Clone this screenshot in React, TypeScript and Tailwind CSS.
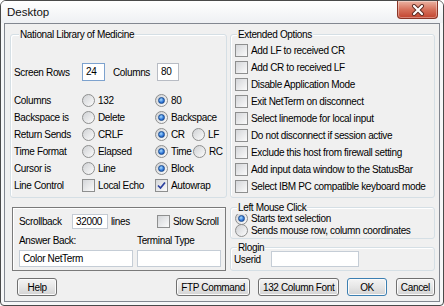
import React from "react";

const Radio = ({
  checked = false,
  label,
  className = "",
}: {
  checked?: boolean;
  label: string;
  className?: string;
}) => (
  <div className={`flex items-center gap-[3px] ${className}`}>
    <span className="flex h-[13px] w-[13px] shrink-0 items-center justify-center rounded-full border border-[#8e8f8f] bg-linear-to-br from-[#cfd1d4] to-[#fcfcfc]">
      {checked && (
        <span className="h-[7px] w-[7px] rounded-full border border-[#1b4c8f] bg-[radial-gradient(circle_at_40%_35%,#a8dcff,#2d73d6_60%,#1a4aa0)]" />
      )}
    </span>
    <span className="whitespace-nowrap">{label}</span>
  </div>
);

const Check = ({
  checked = false,
  label,
  className = "",
}: {
  checked?: boolean;
  label: string;
  className?: string;
}) => (
  <div className={`flex items-center gap-[3px] ${className}`}>
    <span className="flex h-[13px] w-[13px] shrink-0 items-center justify-center border border-[#8e8f8f] bg-linear-to-br from-[#d4d6d9] to-[#fbfbfb]">
      {checked && (
        <svg width="9" height="9" viewBox="0 0 9 9">
          <path d="M1 4.5 L3.5 7 L8 1.5" fill="none" stroke="#2a3f9e" strokeWidth="1.7" />
        </svg>
      )}
    </span>
    <span className="whitespace-nowrap">{label}</span>
  </div>
);

const Group = ({
  title,
  labelLeft,
  className = "",
  children,
}: {
  title: string;
  labelLeft: string;
  className?: string;
  children?: React.ReactNode;
}) => (
  <div
    className={`relative rounded-[3px] border border-[#d5dfe5] shadow-[inset_1px_1px_0_#ffffff] ${className}`}
  >
    <span
      className={`absolute -top-[7px] whitespace-nowrap bg-[#f0f0f0] px-[1px] leading-[13px] ${labelLeft}`}
    >
      {title}
    </span>
    {children}
  </div>
);

const Field = ({ value = "", className = "" }: { value?: string; className?: string }) => (
  <div className={`whitespace-nowrap border bg-white px-[3px] ${className}`}>{value}</div>
);

const Button = ({ label, className = "" }: { label: string; className?: string }) => (
  <div
    className={`flex h-[18px] items-center justify-center whitespace-nowrap rounded-[3px] border bg-linear-to-b from-[#f4f4f4] via-[#e6e6e6] to-[#d3d3d3] shadow-[inset_0_0_0_1px_#fbfbfb] ${className}`}
  >
    {label}
  </div>
);

const Row = ({ label, children }: { label: string; children: React.ReactNode }) => (
  <div className="flex h-[17px] items-center">
    <span className="w-[68px] shrink-0 whitespace-nowrap">{label}</span>
    {children}
  </div>
);

const extended = [
  "Add LF to received CR",
  "Add CR to received LF",
  "Disable Application Mode",
  "Exit NetTerm on disconnect",
  "Select linemode for local input",
  "Do not disconnect if session active",
  "Exclude this host from firewall setting",
  "Add input data window to the StatusBar",
  "Select IBM PC compatible keyboard mode",
];

export default function App() {
  return (
    <div className="h-[306px] w-[444px] bg-white font-['Liberation_Sans',Arial,sans-serif] text-[10px] leading-[13px] tracking-[-0.35px] text-black">
      <div className="flex h-[306px] w-[444px] flex-col rounded-t-[6px] rounded-b-[4px] border border-[#4a4a4a] bg-[#f6f7f8] px-[3px] pb-[3px]">
        {/* title bar */}
        <div className="-mx-[3px] flex h-[22px] shrink-0 justify-between rounded-t-[5px] bg-linear-to-b from-white to-[#eef0f3] pl-[6px] pr-[5px]">
          <span className="self-center text-[11.5px] tracking-normal text-[#111]">Desktop</span>
          <div className="flex h-[18px] w-[41px] items-center justify-center rounded-b-[4px] border border-t-0 border-[#8a3426] bg-linear-to-b from-[#eab3a3] via-[#d6715c] to-[#c2432e] shadow-[inset_0_0_0_1px_rgba(255,255,255,0.35)]">
            <svg width="14" height="12" viewBox="0 0 14 12">
              <path d="M3 2 L11 10 M11 2 L3 10" stroke="#5a2a22" strokeWidth="4" strokeLinecap="round" />
              <path d="M3 2 L11 10 M11 2 L3 10" stroke="#ffffff" strokeWidth="2.2" strokeLinecap="round" />
            </svg>
          </div>
        </div>

        {/* client area */}
        <div className="flex h-[279px] flex-col border border-[#828790] bg-[#f0f0f0] pl-[5px] pr-[4px] pt-[10px] pb-[5px]">
          <div className="flex h-[164px] gap-[3px]">
            <Group title="National Library of Medicine" labelLeft="left-[8px]" className="h-[164px] w-[217px] pl-[3px] pt-[28px]">
              <div className="flex h-[18px] items-center">
                <span className="w-[68px]">Screen Rows</span>
                <Field value="24" className="h-[18px] w-[23px] border-[#7da2ce] leading-[16px]" />
                <span className="ml-[8px] w-[44px]">Columns</span>
                <Field value="80" className="h-[18px] w-[22px] border-[#b8bcc4] leading-[16px]" />
              </div>
              <div className="mt-[11px]">
                <Row label="Columns">
                  <Radio label="132" className="w-[73px]" />
                  <Radio checked label="80" />
                </Row>
                <Row label="Backspace is">
                  <Radio label="Delete" className="w-[73px]" />
                  <Radio checked label="Backspace" />
                </Row>
                <Row label="Return Sends">
                  <Radio label="CRLF" className="w-[73px]" />
                  <Radio checked label="CR" className="w-[37px]" />
                  <Radio label="LF" />
                </Row>
                <Row label="Time Format">
                  <Radio label="Elapsed" className="w-[73px]" />
                  <Radio checked label="Time" className="w-[38px]" />
                  <Radio label="RC" />
                </Row>
                <Row label="Cursor is">
                  <Radio label="Line" className="w-[73px]" />
                  <Radio checked label="Block" />
                </Row>
                <Row label="Line Control">
                  <Check label="Local Echo" className="w-[73px]" />
                  <Check checked label="Autowrap" />
                </Row>
              </div>
            </Group>

            <Group title="Extended Options" labelLeft="left-[6px]" className="h-[164px] w-[205px] pl-[4px] pt-[7px]">
              {extended.map((t) => (
                <div key={t} className="flex h-[17px] items-center">
                  <Check label={t} />
                </div>
              ))}
            </Group>
          </div>

          <div className="mt-[9px] flex h-[64px] gap-[4px]">
            <div className="ml-[2px] h-[64px] w-[214px] border border-[#7a7a7a] pl-[6px] pt-[6px] pr-[3px] shadow-[inset_1px_1px_0_#ffffff]">
              <div className="flex h-[15px] items-center">
                <span className="w-[53px]">Scrollback</span>
                <Field value="32000" className="h-[15px] w-[36px] border-[#c5cbd3] leading-[13px]" />
                <span className="ml-[3px] w-[46px]">lines</span>
                <Check label="Slow Scroll" />
              </div>
              <div className="mt-[5px] flex h-[13px]">
                <span className="w-[118px]">Answer Back:</span>
                <span>Terminal Type</span>
              </div>
              <div className="mt-[3px] flex gap-[4px]">
                <Field value="Color NetTerm" className="h-[17px] w-[114px] border-[#c5cdd6] bg-[#f7f8f9] leading-[15px]" />
                <Field className="h-[17px] w-[84px] border-[#c5cdd6] bg-[#f7f8f9]" />
              </div>
            </div>

            <div className="flex w-[205px] flex-col gap-[8px]">
              <Group title="Left Mouse Click" labelLeft="left-[6px]" className="h-[32px] pl-[4px] pt-[4px]">
                <Radio checked label="Starts text selection" className="h-[12px]" />
                <Radio label="Sends mouse row, column coordinates" className="h-[12px]" />
              </Group>
              <Group title="Rlogin" labelLeft="left-[6px]" className="h-[24px] pl-[3px] pt-[3px]">
                <div className="flex items-center">
                  <span className="w-[37px]">Userid</span>
                  <Field className="h-[16px] w-[88px] border-[#c5cdd6] bg-[#f7f8f9]" />
                </div>
              </Group>
            </div>
          </div>

          <div className="mt-[7px] flex pl-[7px]">
            <Button label="Help" className="w-[41px] border-[#707070]" />
            <Button label="FTP Command" className="ml-[119px] w-[75px] border-[#707070]" />
            <Button label="132 Column Font" className="ml-[8px] w-[83px] border-[#707070]" />
            <Button label="OK" className="ml-[8px] w-[40px] border-[#3c7fb1]" />
            <Button label="Cancel" className="ml-[9px] w-[40px] border-[#707070]" />
          </div>
        </div>
      </div>
    </div>
  );
}
